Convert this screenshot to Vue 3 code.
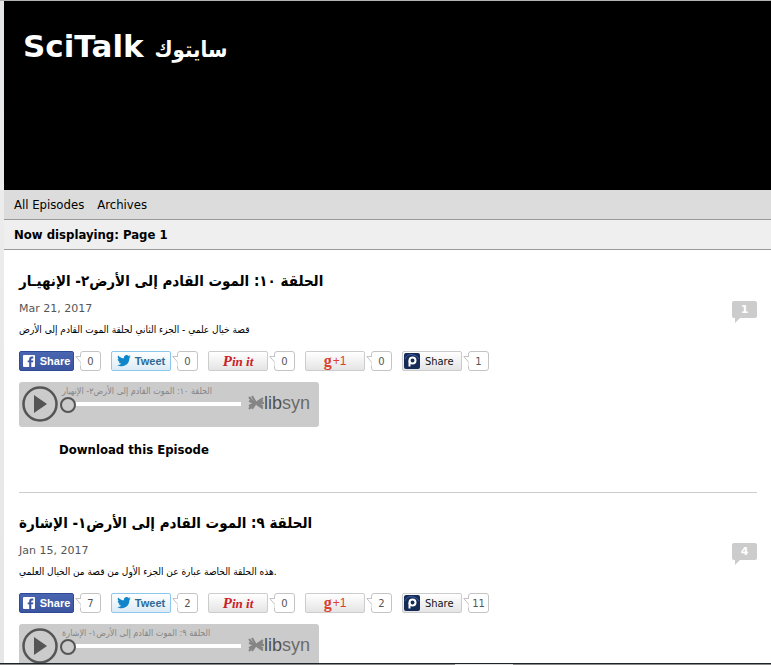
<template>
  <div class="page">
    <div class="site">
      <header class="banner">
        <h1>SciTalk <span lang="ar">سايتوك</span></h1>
      </header>
      <nav class="menu">
        <a href="#episodes">All Episodes</a>
        <a href="#archives">Archives</a>
      </nav>
      <div class="displaying">Now displaying: Page 1</div>

      <main>
        <article v-for="item in episodes" :key="item.id" class="episode">
          <h2>{{ item.title }}</h2>
          <div class="date-row">
            <time>{{ item.date }}</time>
            <a class="comments" href="#comments">{{ item.comments }}</a>
          </div>
          <p class="summary">{{ item.summary }}</p>

          <div class="share-row">
            <div v-for="(kind, i) in networks" :key="kind" class="share">
              <button type="button" :class="['share-btn', kind]" :aria-label="kind">
                <template v-if="kind === 'facebook'">
                  <svg width="12" height="12" viewBox="0 0 12 12">
                    <rect width="12" height="12" rx="1" fill="#fff" />
                    <path d="M6.2 12V7.3H4.7V5.4h1.5V4.1c0-1.6 1-2.5 2.5-2.5h1.6v1.8H9.1c-.6 0-.8.3-.8.8v1.2h2L10 7.3H8.3V12z" fill="#3b55a0" />
                  </svg>
                  <span>Share</span>
                </template>
                <template v-else-if="kind === 'twitter'">
                  <svg width="14" height="12" viewBox="0 0 14 12">
                    <path d="M13.8 1.6l-1.4 1.5c.1 4.8-3.3 8.2-7.6 8.2-1.7 0-3.3-.5-4.6-1.3 1.6.1 3-.3 4.2-1.2-1.3-.1-2.2-.9-2.6-2h1.2C1.6 6.4.7 5.3.7 3.9l1.3.4C.7 3.3.4 1.8 1.2.4c1.5 1.8 3.4 2.8 5.7 2.9C6.6 1.4 7.9.1 9.6.1c.8 0 1.5.3 2 .9l1.8-.7-1.2 1.6z" fill="#0f86c9" />
                  </svg>
                  <span>Tweet</span>
                </template>
                <span v-else-if="kind === 'pinterest'"><b>P</b>in it</span>
                <template v-else-if="kind === 'google'">
                  <b>g</b><span>+1</span>
                </template>
                <template v-else>
                  <svg width="16" height="16" viewBox="0 0 16 16">
                    <rect width="16" height="16" rx="2" fill="#172b57" />
                    <path d="M1 6Q3 1 8 1.5T15 6" fill="none" stroke="#3c60a7" />
                    <circle cx="8.5" cy="7.500" r="3" fill="none" stroke="#fff" stroke-width="2" />
                    <path d="M5.500 7.500V13.500" stroke="#fff" stroke-width="2" />
                  </svg>
                  <span>Share</span>
                </template>
              </button>
              <span class="count">
                <svg width="6" height="10" viewBox="0 0 6 10">
                  <path d="M6 .5H.8L5.5 6V10H6z" fill="#fff" />
                  <path d="M6 .5H.8L5.5 6" fill="none" stroke="#c4c4c4" />
                </svg>
                {{ item.shares[i] }}
              </span>
            </div>
          </div>

          <div class="player">
            <button type="button" class="play" aria-label="Play">
              <svg width="36" height="36" viewBox="0 0 36 36">
                <circle cx="18" cy="18" r="16.5" fill="none" stroke="#555" stroke-width="2.5" />
                <path d="M12 9l13 9-13 9z" fill="#555" />
              </svg>
            </button>
            <div class="track">
              <label :for="'seek-' + item.id">{{ item.playerTitle }}</label>
              <input :id="'seek-' + item.id" v-model="item.position" type="range" min="0" max="100" />
            </div>
            <div class="libsyn">
              <svg width="16" height="16" viewBox="0 0 16 16">
                <g fill="none" stroke="#858585" stroke-width="2">
                  <path d="M1 2l5 6-5 6M4 1l4 7-4 6M1 6l6 2-6 3" />
                  <path d="M15 3L9 7M15 5.500L8 7.500M16 8H7M15 11L8 8.500M15 13.500l-6-4" />
                </g>
              </svg>
              <span><b>lib</b>syn</span>
            </div>
          </div>

          <a v-if="item.download" class="download" :href="item.download">Download this Episode</a>
        </article>
      </main>
    </div>
    <div class="bottom-edge"><i></i></div>
  </div>
</template>

<script setup>
import { ref } from 'vue'

const networks = ['facebook', 'twitter', 'pinterest', 'google', 'paper']

const episodes = ref([
  {
    id: 10,
    title: 'الحلقة ١٠: الموت القادم إلى الأرض٢- الإنهيـار',
    playerTitle: 'الحلقة ١٠: الموت القادم إلى الأرض٢- الإنهيار',
    date: 'Mar 21, 2017',
    summary: 'قصة خيال علمي - الجزء الثاني لحلقة الموت القادم إلى الأرض',
    comments: 1,
    shares: [0, 0, 0, 0, 1],
    position: 0,
    download: '#download'
  },
  {
    id: 9,
    title: 'الحلقة ٩: الموت القادم إلى الأرض١- الإشارة',
    playerTitle: 'الحلقة ٩: الموت القادم إلى الأرض١- الإشارة',
    date: 'Jan 15, 2017',
    summary: 'هذه الحلقة الخاصة عبارة عن الجزء الأول من قصة من الخيال العلمي.',
    comments: 4,
    shares: [7, 2, 0, 2, 11],
    position: 0
  }
])
</script>

<style>
body {
  margin: 0;
  background: #e8e8e8;
}
</style>

<style scoped>
.page {
  height: 100vh;
  overflow: hidden;
  box-sizing: border-box;
  border-top: 1px solid #b4b4b4;
  padding-left: 4px;
  background: linear-gradient(#e3e5e7, #ececec 30%, #e6e6e6);
  color: #000;
  font-family: Tahoma, "DejaVu Sans Condensed", "DejaVu Sans", sans-serif;
  font-size: 13px;
}
.site {
  background: #fff;
}
a {
  color: inherit;
  text-decoration: none;
}
.banner {
  height: 189px;
  box-sizing: border-box;
  padding: 27px 19px;
  background: #000;
  color: #fff;
}
h1 {
  margin: 0;
  font-family: Verdana, "DejaVu Sans", sans-serif;
  font-size: 31px;
  line-height: 36px;
}
h1 span {
  font-family: Tahoma, "DejaVu Sans Condensed", sans-serif;
  font-size: 22px;
}
.menu {
  display: flex;
  gap: 13px;
  padding: 0 10px;
  line-height: 29px;
  background: #dcdcdc;
  border-bottom: 1px solid #999;
}
.displaying {
  padding: 0 10px;
  line-height: 29px;
  font-weight: bold;
  background: #efefef;
  border-bottom: 1px solid #999;
}
main {
  padding-top: 1px;
}
.episode {
  height: 242px;
  box-sizing: border-box;
  margin: 0 14px 0 15px;
  padding-top: 17px;
  border-bottom: 1px solid #ccc;
}
h2 {
  margin: 0 0 4px;
  font-size: 15px;
  line-height: 26px;
}
.date-row {
  display: flex;
  justify-content: space-between;
  height: 22px;
  font-family: Verdana, "DejaVu Sans", sans-serif;
  font-size: 11px;
  line-height: 22px;
  color: #555;
}
.comments {
  position: relative;
  width: 25px;
  height: 17px;
  margin-top: 3px;
  border-radius: 2px;
  background: #ccc;
  color: #fff;
  font-weight: bold;
  line-height: 17px;
  text-align: center;
}
.comments::after {
  content: "";
  position: absolute;
  left: 3px;
  top: 17px;
  border-top: 5px solid #ccc;
  border-right: 5px solid transparent;
}
.summary {
  margin: 0;
  font-size: 10px;
  line-height: 20px;
}
.share-row {
  display: flex;
  gap: 10px;
  margin-top: 11px;
}
.share {
  display: flex;
  gap: 6px;
}
.share-btn {
  display: flex;
  align-items: center;
  justify-content: center;
  gap: 4px;
  width: 60px;
  height: 20px;
  box-sizing: border-box;
  padding: 0;
  border: 1px solid #ccc;
  border-radius: 2px;
  background: linear-gradient(#fff, #e4e4e4);
  font-family: "Liberation Sans", Arial, sans-serif;
  font-size: 11px;
}
.facebook {
  width: 55px;
  gap: 5px;
  border-color: #2f4a94;
  background: linear-gradient(#4a66b0, #3b55a0);
  color: #fff;
  font-weight: bold;
}
.twitter {
  border-color: #8cc8ee;
  background: linear-gradient(#fff, #dcebf5);
  color: #2d6a94;
  font-weight: bold;
}
.pinterest {
  color: #cb2027;
  font-family: "Liberation Serif", serif;
  font-size: 13px;
  font-style: italic;
  font-weight: bold;
  line-height: 16px;
}
.pinterest b {
  font-size: 15px;
}
.google {
  gap: 1px;
  color: #d8412f;
  font-size: 12px;
}
.google b {
  font-family: "Liberation Serif", serif;
  font-size: 16px;
  line-height: 16px;
}
.paper {
  justify-content: flex-start;
  gap: 5px;
  padding-left: 1px;
  color: #111;
  font-family: Tahoma, "DejaVu Sans Condensed", sans-serif;
}
.count {
  position: relative;
  width: 21px;
  height: 20px;
  box-sizing: border-box;
  border: 1px solid #c4c4c4;
  border-radius: 3px;
  background: #fff;
  color: #555;
  font-family: Verdana, "DejaVu Sans", sans-serif;
  font-size: 10px;
  line-height: 19px;
  text-align: center;
}
.count svg {
  position: absolute;
  left: -6px;
  top: 4px;
}
.player {
  display: flex;
  width: 300px;
  height: 45px;
  box-sizing: border-box;
  margin-top: 11px;
  padding: 4px 3px;
  border-radius: 3px;
  background: #cbcbcb;
}
.play {
  width: 36px;
  height: 36px;
  padding: 0;
  border: 0;
  background: none;
}
.play svg {
  display: block;
}
.track {
  flex: 1;
  display: flex;
  flex-direction: column;
  margin: 0 7px 0 2px;
}
.track label {
  height: 11px;
  padding-left: 2px;
  color: #858585;
  font-size: 9px;
  line-height: 10px;
  white-space: nowrap;
}
.track input {
  appearance: none;
  width: 100%;
  height: 16px;
  margin: 0;
  background: linear-gradient(#fff, #fff) 7px 5px / 175px 4px no-repeat;
}
.track input::-webkit-slider-thumb {
  appearance: none;
  width: 16px;
  height: 16px;
  box-sizing: border-box;
  border: 2px solid #555;
  border-radius: 50%;
  background: #cbcbcb;
}
.libsyn {
  display: flex;
  align-items: center;
  width: 63px;
  height: 34px;
  margin-right: 5px;
  color: #6a6a6a;
  font-family: "Liberation Sans", Arial, sans-serif;
  font-size: 18px;
}
.libsyn svg {
  flex: none;
}
.libsyn b {
  color: #505050;
  font-weight: normal;
}
.download {
  display: block;
  margin: 13px 0 0 40px;
  font-weight: bold;
  line-height: 20px;
}
.bottom-edge {
  position: fixed;
  left: 0;
  right: 0;
  bottom: 0;
  height: 2px;
  box-sizing: border-box;
  border-top: 1px solid #1b232b;
  background: #888;
}
.bottom-edge i {
  display: block;
  width: 58px;
  height: 1px;
  margin-left: 59%;
  background: #ddd;
}
</style>
